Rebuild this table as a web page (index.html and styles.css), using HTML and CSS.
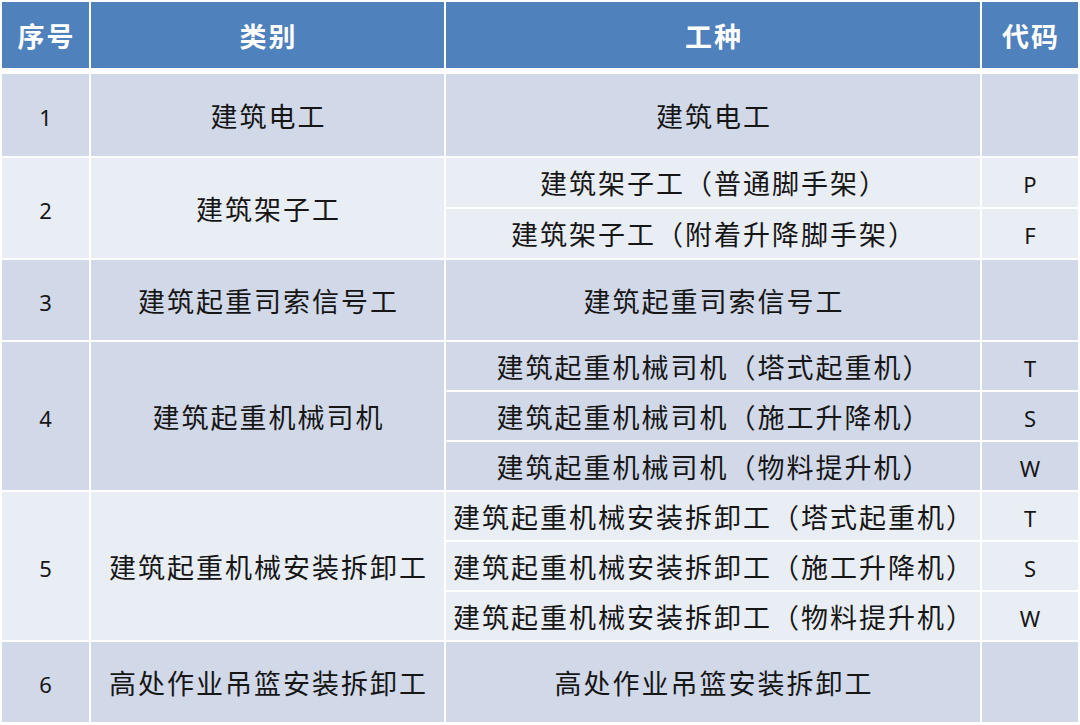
FILE: index.html
```html
<!DOCTYPE html>
<html lang="zh-CN">
<head>
<meta charset="utf-8">
<title>工种代码</title>
<link rel="stylesheet" href="styles.css">
</head>
<body>
<table class="grid">
  <colgroup>
    <col class="c-no">
    <col class="c-cat">
    <col class="c-type">
    <col class="c-code">
  </colgroup>
  <thead>
    <tr class="head">
      <th>序号</th>
      <th>类别</th>
      <th>工种</th>
      <th>代码</th>
    </tr>
  </thead>
  <tbody>
    <tr class="dark tall">
      <td class="num">1</td>
      <td>建筑电工</td>
      <td>建筑电工</td>
      <td class="num"></td>
    </tr>
    <tr class="light sub49">
      <td class="num" rowspan="2">2</td>
      <td rowspan="2">建筑架子工</td>
      <td>建筑架子工（普通脚手架）</td>
      <td class="num">P</td>
    </tr>
    <tr class="light sub49">
      <td>建筑架子工（附着升降脚手架）</td>
      <td class="num">F</td>
    </tr>
    <tr class="dark mid">
      <td class="num">3</td>
      <td>建筑起重司索信号工</td>
      <td>建筑起重司索信号工</td>
      <td class="num"></td>
    </tr>
    <tr class="dark sub48">
      <td class="num" rowspan="3">4</td>
      <td rowspan="3">建筑起重机械司机</td>
      <td>建筑起重机械司机（塔式起重机）</td>
      <td class="num">T</td>
    </tr>
    <tr class="dark sub48">
      <td>建筑起重机械司机（施工升降机）</td>
      <td class="num">S</td>
    </tr>
    <tr class="dark sub48">
      <td>建筑起重机械司机（物料提升机）</td>
      <td class="num">W</td>
    </tr>
    <tr class="light sub48">
      <td class="num" rowspan="3">5</td>
      <td rowspan="3">建筑起重机械安装拆卸工</td>
      <td>建筑起重机械安装拆卸工（塔式起重机）</td>
      <td class="num">T</td>
    </tr>
    <tr class="light sub48">
      <td>建筑起重机械安装拆卸工（施工升降机）</td>
      <td class="num">S</td>
    </tr>
    <tr class="light sub48">
      <td>建筑起重机械安装拆卸工（物料提升机）</td>
      <td class="num">W</td>
    </tr>
    <tr class="dark mid">
      <td class="num">6</td>
      <td>高处作业吊篮安装拆卸工</td>
      <td>高处作业吊篮安装拆卸工</td>
      <td class="num"></td>
    </tr>
  </tbody>
</table>
</body>
</html>
```

FILE: styles.css
```css
html, body {
  margin: 0;
  padding: 0;
  background: #ffffff;
}

.grid {
  width: 1080px;
  table-layout: fixed;
  border-collapse: separate;
  border-spacing: 2px;
  background: #ffffff;
  font-family: "Noto Sans", "Noto Sans CJK SC", sans-serif;
  color: #161616;
}

.c-no { width: 87px; }
.c-cat { width: 353px; }
.c-type { width: 534px; }
.c-code { width: 96px; }

.grid th,
.grid td {
  box-sizing: border-box;
  padding: 4px 0 0 2px;
  text-align: center;
  vertical-align: middle;
  font-size: 27px;
  letter-spacing: 2px;
  line-height: 1.2;
  font-weight: 400;
}

.grid th {
  height: 70px;
  background: #4f81bd;
  color: #ffffff;
  font-weight: 700;
  border-bottom: 4px solid #ffffff;
  padding-top: 5px;
}

.grid td.num {
  font-size: 22px;
  letter-spacing: 0;
  padding-left: 0;
}

.dark td { background: #d1d8e8; }
.light td { background: #e9edf4; }

.tall td { height: 82px; }
.mid td { height: 80px; }
.sub49 td { height: 49px; }
.sub48 td { height: 48px; }
```
